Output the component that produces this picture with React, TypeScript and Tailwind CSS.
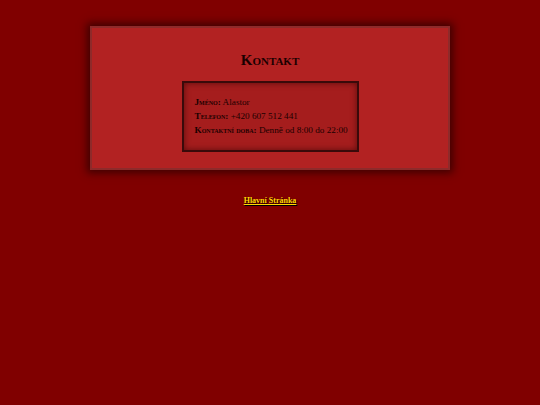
export default function App() {
  return (
    <div className="min-h-[405px] bg-[#800000] pt-[26px] font-['Liberation_Serif',Georgia,serif] text-[#1a0000]">
      {/* Card */}
      <div className="mx-auto w-[360px] border-2 border-[#8e2a2a] bg-[#b22222] px-4 pb-[16px] pt-[22px] shadow-[0_0_8px_3px_rgba(40,0,0,0.75)]">
        <h1 className="text-center text-[15px] font-bold leading-[20px] [font-variant:small-caps]">
          Kontakt
        </h1>
        <div className="mx-auto mt-[11px] w-[177px] border-2 border-[#3a0a0a] bg-[#a51d1d] pb-[13px] pl-[11px] pr-1 pt-[12px] text-[9.2px] leading-[14px] shadow-[inset_0_0_6px_rgba(40,0,0,0.6)]">
          <p>
            <span className="font-bold [font-variant:small-caps]">Jméno:</span> Alastor
          </p>
          <p>
            <span className="font-bold [font-variant:small-caps]">Telefon:</span> +420 607 512 441
          </p>
          <p className="whitespace-nowrap">
            <span className="font-bold [font-variant:small-caps]">Kontaktní doba:</span> Denně od 8:00 do 22:00
          </p>
        </div>
      </div>

      {/* Footer link */}
      <div className="mt-[16px] text-center">
        <a
          href="#"
          className="text-[8px] font-bold text-[#ffd700] underline [text-shadow:1px_1px_1px_#000]"
        >
          Hlavní Stránka
        </a>
      </div>
    </div>
  )
}
